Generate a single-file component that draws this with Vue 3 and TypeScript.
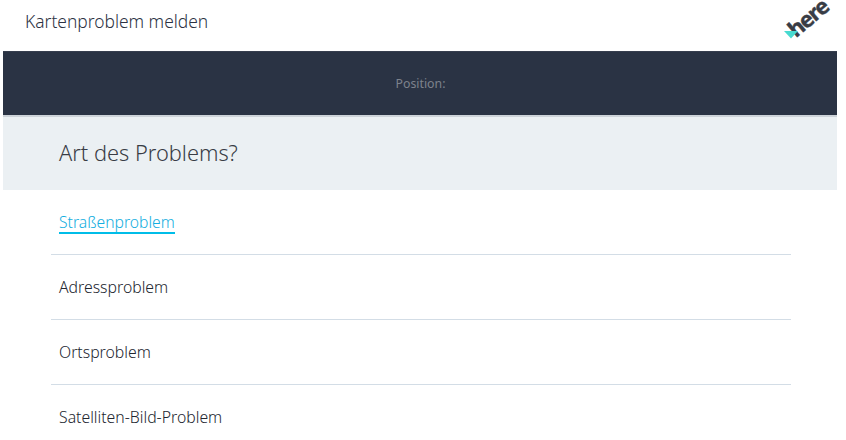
<script setup lang="ts">
const items: string[] = ['Adressproblem', 'Ortsproblem', 'Satelliten-Bild-Problem']
</script>

<template>
  <div class="page">
    <header class="top">
      <span class="title">Kartenproblem melden</span>
      <div class="logo">
        <span class="here">here</span>
        <svg class="tri" width="14" height="8" viewBox="0 0 14 8"><path d="M0 0H14L7 7.5Z" fill="#48dad0" /></svg>
      </div>
    </header>
    <div class="pos">Position:</div>
    <div class="question"><h1>Art des Problems?</h1></div>
    <ul class="list">
      <li class="row"><a class="active">Straßenproblem</a></li>
      <li v-for="item in items" :key="item" class="row">{{ item }}</li>
    </ul>
  </div>
</template>

<style>
html, body { margin: 0; overflow: hidden; background: #fff; }
</style>

<style scoped>
.page {
  width: 834px;
  height: 440px;
  margin-left: 3px;
  overflow: hidden;
  font-family: "Noto Sans", "Open Sans", sans-serif;
}
.top {
  height: 51px;
  display: flex;
  justify-content: space-between;
  padding-left: 22px;
  box-sizing: border-box;
}
.title {
  font-size: 17.4px;
  font-weight: 300;
  line-height: 42px;
  color: #2c3243;
}
.logo { position: relative; width: 60px; }
.here {
  position: absolute;
  left: 8px;
  top: 7px;
  font: 700 22px/20px "Noto Sans", sans-serif;
  letter-spacing: -1.3px;
  color: #383c45;
  -webkit-text-stroke: 0.4px #383c45;
  transform: rotate(-40deg);
}
.tri { position: absolute; left: 7px; top: 31px; }
.pos {
  background: #2a3344;
  border-top: 1px solid #363e4e;
  border-bottom: 2px solid #cdd3d9;
  height: 63px;
  text-align: center;
  font-size: 12.3px;
  line-height: 64px;
  color: #7d828c;
  padding-left: 1px;
}
.question {
  height: 73px;
  background: #ebf0f3;
  padding-left: 56px;
}
h1 {
  margin: 0;
  font-size: 21.8px;
  font-weight: 300;
  line-height: 72px;
  color: #383c45;
}
.list {
  list-style: none;
  margin: 0 46px 0 48px;
  padding: 0;
}
.row {
  height: 64px;
  padding-left: 8px;
  border-bottom: 1px solid #d3dde6;
  font-size: 15.8px;
  font-weight: 300;
  line-height: 65px;
  color: #22262f;
}
.active {
  display: inline-block;
  line-height: 20px;
  font-size: 15.7px;
  color: #14aee0;
  border-bottom: 2px solid #00bde8;
}
</style>
